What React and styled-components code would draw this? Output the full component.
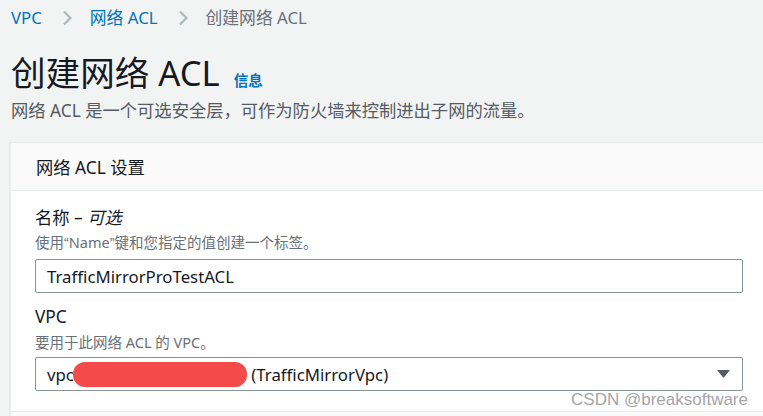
import React from "react";
import styled, { createGlobalStyle } from "styled-components";

const Global = createGlobalStyle`
  html, body { margin: 0; padding: 0; background: #f2f3f3; }
  body { font-family: "Noto Sans", "Noto Sans CJK SC", sans-serif; color: #16191f; }
  * { box-sizing: border-box; }
`;

const Page = styled.div`
  position: relative;
  width: 763px;
  height: 416px;
  overflow: hidden;
  padding: 8px 0 0 11px;
`;

const Crumbs = styled.nav`
  display: flex;
  align-items: center;
  font-size: 16.8px;
  line-height: 20px;
  height: 20px;
`;

const Crumb = styled.span`
  color: ${(p) => (p.$current ? "#687078" : "#0073bb")};
  white-space: nowrap;
`;

const Chevron = styled.svg`
  width: 10px;
  height: 16px;
  margin: 0 18px 0 20px;
  flex: none;
`;

const TitleRow = styled.div`
  display: flex;
  align-items: baseline;
  margin-top: 25px;
  height: 40px;
`;

const Title = styled.h1`
  margin: 0;
  font-size: 34.6px;
  line-height: 40px;
  font-weight: 400;
  color: #16191f;
`;

const Info = styled.a`
  margin-left: 14px;
  font-size: 14.5px;
  font-weight: 700;
  color: #0073bb;
  text-decoration: none;
`;

const Lead = styled.p`
  margin: 7px 0 0;
  font-size: 17.3px;
  line-height: 22px;
  color: #545b64;
  white-space: nowrap;
`;

const Panel = styled.section`
  margin: 20px 0 0 -1px;
  width: 800px;
  background: #fff;
  border: 1px solid #eaeded;
  box-shadow: 0 1px 1px 0 rgba(0, 28, 36, 0.2);
`;

const PanelHeader = styled.header`
  height: 48px;
  display: flex;
  align-items: center;
  padding-left: 25px;
  background: #fafafa;
  border-bottom: 1px solid #eaeded;
  font-size: 17.3px;
  color: #16191f;
`;

const PanelBody = styled.div`
  padding: 16px 0 20px 24px;
  display: flex;
  flex-direction: column;
`;

const Field = styled.div`
  display: flex;
  flex-direction: column;
  margin-top: ${(p) => p.$gap || 0}px;
`;

const Label = styled.label`
  font-size: 17.3px;
  line-height: 22px;
  color: #16191f;
  em { font-style: italic; }
`;

const Hint = styled.div`
  margin-top: ${(p) => p.$gap}px;
  font-size: 14.5px;
  line-height: 18px;
  color: #687078;
  white-space: nowrap;
`;

const Quote = styled.span`
  font-family: "Liberation Sans", Arial, sans-serif;
`;

const Input = styled.div`
  margin-top: ${(p) => p.$gap}px;
  width: 708px;
  height: 34px;
  border: 1px solid #879596;
  border-radius: 2px;
  background: #fff;
  display: flex;
  align-items: center;
  padding: 0 12px 0 11px;
  font-size: 16.8px;
  color: #16191f;
  white-space: nowrap;
`;

const SelectText = styled.span`
  flex: 1;
  display: flex;
  align-items: center;
  white-space: pre;
`;

const Redact = styled.span`
  display: inline-block;
  width: 174px;
  height: 25px;
  margin-left: -1px;
  border-radius: 12px;
  background: #f44a4a;
`;

const Caret = styled.svg`
  width: 13px;
  height: 8px;
  flex: none;
`;

const Footer = styled.div`
  height: 20px;
  background: #fafafa;
  border-top: 1px solid #eaeded;
`;

const Watermark = styled.div`
  position: absolute;
  right: 15px;
  top: 389px;
  font-family: "Liberation Sans", Arial, sans-serif;
  font-size: 17px;
  line-height: 22px;
  color: #a5a5a5;
`;

const ChevronIcon = () => (
  <Chevron viewBox="0 0 10 16">
    <path d="M2 1.5 L8.5 8 L2 14.5" fill="none" stroke="#aab7b8" strokeWidth="2.2" />
  </Chevron>
);

export default function App() {
  return (
    <>
      <Global />
      <Page>
        <Crumbs>
          <Crumb>VPC</Crumb>
          <ChevronIcon />
          <Crumb>网络 ACL</Crumb>
          <ChevronIcon />
          <Crumb $current>创建网络 ACL</Crumb>
        </Crumbs>
        <TitleRow>
          <Title>创建网络 ACL</Title>
          <Info href="#">信息</Info>
        </TitleRow>
        <Lead>网络 ACL 是一个可选安全层，可作为防火墙来控制进出子网的流量。</Lead>
        <Panel>
          <PanelHeader>网络 ACL 设置</PanelHeader>
          <PanelBody>
            <Field>
              <Label>
                名称 – <em>可选</em>
              </Label>
              <Hint $gap={4}>
                使用<Quote>“</Quote>Name<Quote>”</Quote>键和您指定的值创建一个标签。
              </Hint>
              <Input $gap={7}>TrafficMirrorProTestACL</Input>
            </Field>
            <Field $gap={13}>
              <Label>VPC</Label>
              <Hint $gap={5}>要用于此网络 ACL 的 VPC。</Hint>
              <Input $gap={6}>
                <SelectText>
                  vpc<Redact />{" (TrafficMirrorVpc)"}
                </SelectText>
                <Caret viewBox="0 0 13 8">
                  <path d="M0 0 H13 L6.5 8 Z" fill="#545b64" />
                </Caret>
              </Input>
            </Field>
          </PanelBody>
          <Footer />
        </Panel>
        <Watermark>CSDN @breaksoftware</Watermark>
      </Page>
    </>
  );
}
